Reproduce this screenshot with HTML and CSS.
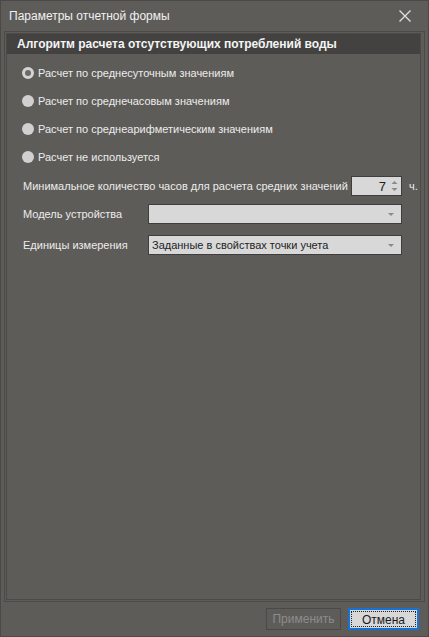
FILE: index.html
```html
<!DOCTYPE html>
<html lang="ru">
<head>
    <meta charset="UTF-8">
    <title>Параметры отчетной формы</title>
    <link rel="stylesheet" href="styles.css">
</head>
<body>
    <div class="window">
        <div class="titlebar">
            <span class="title">Параметры отчетной формы</span>
            <svg class="close" width="12" height="12" viewBox="0 0 12 12">
                <path d="M0.5 0.5 L11.5 11.5 M11.5 0.5 L0.5 11.5" stroke="#e0e0e0" stroke-width="1.3" fill="none"/>
            </svg>
        </div>

        <div class="content">
            <div class="group">
                <div class="group-header">Алгоритм расчета отсутствующих потреблений воды</div>
                <div class="group-body">
                    <div class="radio-row"><span class="radio checked"></span>Расчет по среднесуточным значениям</div>
                    <div class="radio-row"><span class="radio"></span>Расчет по среднечасовым значениям</div>
                    <div class="radio-row"><span class="radio"></span>Расчет по среднеарифметическим значениям</div>
                    <div class="radio-row"><span class="radio"></span>Расчет не используется</div>

                    <div class="field-row hours">
                        <span class="label">Минимальное количество часов для расчета средних значений</span>
                        <div class="spin">
                            <span class="spin-value">7</span>
                            <svg width="7" height="14" viewBox="0 0 7 14">
                                <path d="M0.5 5 L3.5 2 L6.5 5 Z" fill="#8a8a8a"/>
                                <path d="M0.5 9 L3.5 12 L6.5 9 Z" fill="#8a8a8a"/>
                            </svg>
                        </div>
                        <span class="unit">ч.</span>
                    </div>

                    <div class="field-row model">
                        <span class="label wide">Модель устройства</span>
                        <div class="combo">
                            <span class="combo-value"></span>
                            <span class="arrow"></span>
                        </div>
                    </div>

                    <div class="field-row units">
                        <span class="label wide">Единицы измерения</span>
                        <div class="combo">
                            <span class="combo-value">Заданные в свойствах точки учета</span>
                            <span class="arrow"></span>
                        </div>
                    </div>
                </div>
            </div>
        </div>

        <div class="footer">
            <button class="btn disabled">Применить</button>
            <button class="btn primary"><span class="focus">Отмена</span></button>
        </div>
    </div>
</body>
</html>
```

FILE: styles.css
```css
body {
    margin: 0;
    font-family: "Liberation Sans", Arial, sans-serif;
    font-size: 11px;
    background-color: #5e5c59;
}
.window {
    width: 429px;
    height: 637px;
    box-sizing: border-box;
    border: 1px solid #4a4947;
    background-color: #5e5c59;
    display: flex;
    flex-direction: column;
    color: #ececec;
}
.titlebar {
    height: 30px;
    display: flex;
    align-items: center;
    justify-content: space-between;
    padding: 0 17px 0 8px;
    font-size: 12px;
    color: #f0f0f0;
}
.content {
    flex: 1;
    margin: 0 3px;
    border: 1px solid #4b4a48;
    padding: 1px 3px 1px 1px;
    display: flex;
}
.group {
    flex: 1;
    min-width: 0;
    border: 1px solid #4b4a48;
    display: flex;
    flex-direction: column;
}
.group-header {
    height: 20px;
    line-height: 20px;
    background-color: #434241;
    padding-left: 10px;
    font-weight: bold;
    font-size: 12px;
    color: #f4f4f4;
}
.group-body {
    padding: 5px 0 0 15px;
}
.radio-row {
    height: 28px;
    display: flex;
    align-items: center;
    white-space: nowrap;
}
.radio {
    width: 12px;
    height: 12px;
    border-radius: 50%;
    background-color: #d0d0d0;
    margin-right: 4px;
    box-sizing: border-box;
}
.radio.checked {
    border: 3px solid #d4d4d4;
    background-color: #6a6a6a;
}
.field-row {
    height: 20px;
    display: flex;
    align-items: center;
    margin-left: 1px;
    margin-right: 18px;
    white-space: nowrap;
}
.field-row.hours {
    margin-top: 5px;
    margin-right: 0;
}
.field-row.model {
    margin-top: 8px;
}
.field-row.units {
    margin-top: 11px;
}
.label {
    flex: 1;
}
.label.wide {
    flex: none;
    width: 125px;
}
.spin {
    width: 51px;
    height: 20px;
    box-sizing: border-box;
    border: 1px solid #3e3e3e;
    background-color: #d8d8d8;
    display: flex;
    align-items: center;
    justify-content: flex-end;
    padding-right: 3px;
    color: #222;
}
.spin-value {
    margin-right: 5px;
    font-size: 13px;
}
.unit {
    width: 11px;
    padding-left: 7px;
}
.combo {
    flex: 1;
    height: 20px;
    box-sizing: border-box;
    border: 1px solid #3e3e3e;
    background-color: #d8d8d8;
    display: flex;
    align-items: center;
    padding: 0 7px 0 3px;
    color: #1e1e1e;
}
.combo-value {
    flex: 1;
}
.arrow {
    width: 0;
    height: 0;
    border-left: 3px solid transparent;
    border-right: 3px solid transparent;
    border-top: 3px solid #8a8a8a;
}
.footer {
    height: 34px;
    display: flex;
    justify-content: flex-end;
    align-items: center;
    gap: 7px;
    padding-right: 9px;
}
.btn {
    width: 75px;
    height: 22px;
    font-family: inherit;
    font-size: 12px;
    box-sizing: border-box;
    padding: 0;
}
.btn.disabled {
    background-color: #5e5c59;
    border: 1px solid #4a4947;
    color: #8c8c8c;
}
.btn.primary {
    width: 71px;
    background-color: #d8d8d8;
    border: 2px solid #1672d4;
    color: #1a1a1a;
    padding: 1px;
}
.focus {
    display: block;
    height: 100%;
    line-height: 16px;
    border: 1px dotted #222;
    box-sizing: border-box;
}
```
